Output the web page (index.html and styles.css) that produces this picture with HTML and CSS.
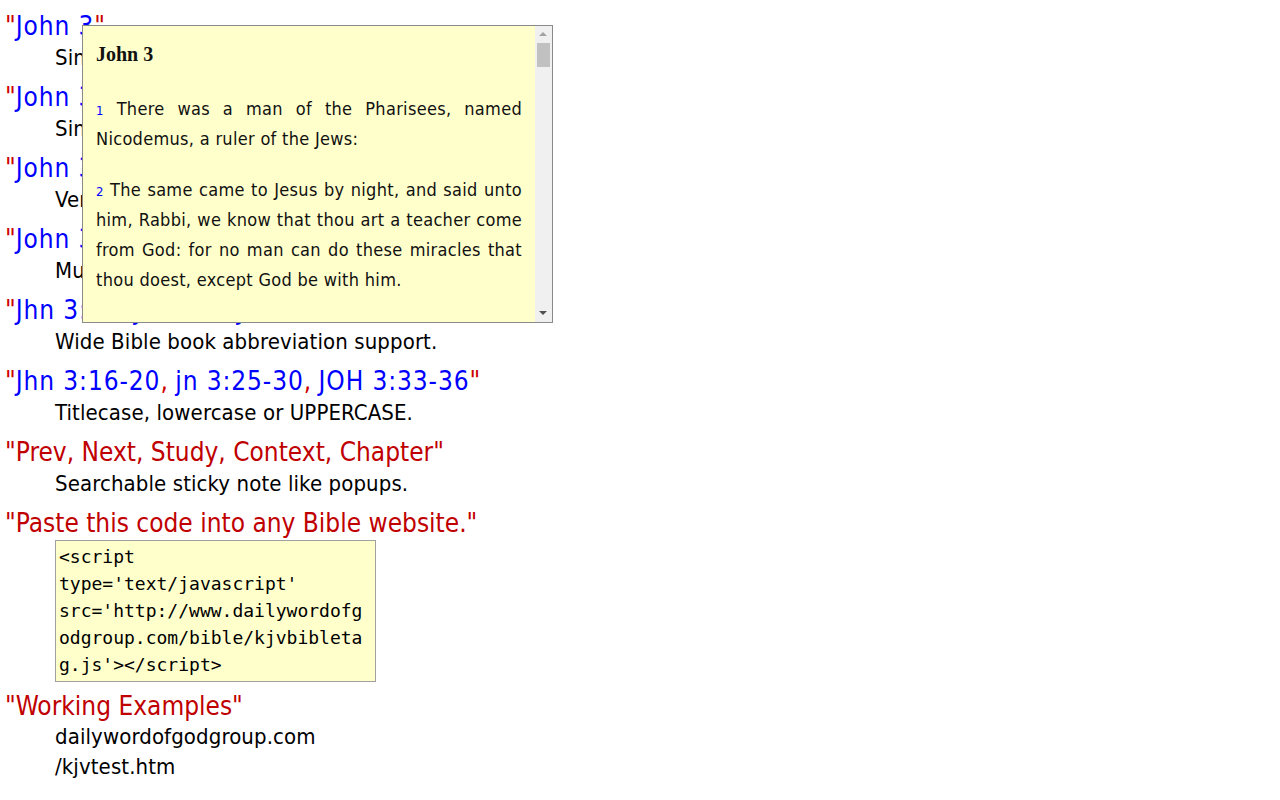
FILE: index.html
```html
<!DOCTYPE html>
<html>
<head>
<meta charset="utf-8">
<link rel="stylesheet" href="styles.css">
</head>
<body>
<div class="page">
  <dl class="list">
    <dt><span class="q">"</span><span class="ref">John 3</span><span class="q">"</span></dt>
    <dd>Simple chapter reference.</dd>
    <dt><span class="q">"</span><span class="ref">John 3:16</span><span class="q">"</span></dt>
    <dd>Simple verse reference.</dd>
    <dt><span class="q">"</span><span class="ref">John 3:16-18</span><span class="q">"</span></dt>
    <dd>Verse range reference.</dd>
    <dt><span class="q">"</span><span class="ref">John 3:16</span><span class="q">, </span><span class="ref">18</span><span class="q">, </span><span class="ref">20</span><span class="q">"</span></dt>
    <dd>Multiple verse references.</dd>
    <dt><span class="q">"</span><span class="ref">Jhn 3:16</span><span class="q">, </span><span class="ref">Jn 3:16</span><span class="q">, </span><span class="ref">Joh 3:16</span><span class="q">"</span></dt>
    <dd>Wide Bible book abbreviation support.</dd>
    <dt><span class="q">"</span><span class="ref">Jhn 3:16-20</span><span class="q">, </span><span class="ref">jn 3:25-30</span><span class="q">, </span><span class="ref">JOH 3:33-36</span><span class="q">"</span></dt>
    <dd>Titlecase, lowercase or UPPERCASE.</dd>
    <dt class="red">"Prev, Next, Study, Context, Chapter"</dt>
    <dd>Searchable sticky note like popups.</dd>
    <dt class="red">"Paste this code into any Bible website."</dt>
    <dd class="code-dd"><div class="code">&lt;script type='text/javascript' src='http://www.dailywordofgodgroup.com/bible/kjvbibletag.js'&gt;&lt;/script&gt;</div></dd>
    <dt class="red">"Working Examples"</dt>
    <dd class="link">dailywordofgodgroup.com<br>/kjvtest.htm</dd>
  </dl>

  <div class="popup">
    <div class="popup-body">
      <h3 class="popup-title">John 3</h3>
      <p class="verse first"><span class="vn">1</span> There was a man of the Pharisees, named Nicodemus, a ruler of the Jews:</p>
      <p class="verse"><span class="vn">2</span> The same came to Jesus by night, and said unto him, Rabbi, we know that thou art a teacher come from God: for no man can do these miracles that thou doest, except God be with him.</p>
      <p class="verse"><span class="vn">3</span> Jesus answered and said unto him, Verily, verily, I say unto thee, Except a man be born again, he cannot see the kingdom of God.</p>
    </div>
    <div class="scrollbar">
      <div class="arrow up"></div>
      <div class="track"><div class="thumb"></div></div>
      <div class="arrow down"></div>
    </div>
  </div>
</div>
</body>
</html>
```
FILE: styles.css
```css
html, body {
  margin: 0;
  padding: 0;
  background: #fff;
}
.page {
  position: relative;
  width: 1280px;
  height: 800px;
  overflow: hidden;
  font-family: "DejaVu Sans Condensed", "DejaVu Sans", sans-serif;
}
.list {
  margin: 0;
  padding: 11px 0 0 5px;
}
.list dt {
  font-size: 26px;
  line-height: 31px;
  color: #cc0000;
  letter-spacing: 0;
}
.list dt .ref {
  color: #0000ff;
  letter-spacing: 0.9px;
}
.list dt .q { color: #cc0000; }
.list dt.red { color: #c00000; }
.list dd {
  margin: 0 0 9px 50px;
  font-size: 22px;
  line-height: 31px;
  letter-spacing: 0.1px;
  color: #000;
}
.list dd.code-dd { margin-bottom: 9px; }
.list dd.link { line-height: 30px; }
.code {
  width: 312px;
  margin-top: 1px;
  padding: 2px 4px 3px 3px;
  border: 1px solid #a0a0a0;
  background: #ffffcc;
  font-family: "DejaVu Sans Mono", "Liberation Mono", monospace;
  font-size: 18px;
  line-height: 27px;
  letter-spacing: 0;
  overflow-wrap: anywhere;
}
.popup {
  position: absolute;
  left: 82px;
  top: 25px;
  width: 469px;
  height: 296px;
  border: 1px solid #8a8a8a;
  background: #ffffcc;
  display: flex;
  overflow: hidden;
}
.popup-body {
  flex: 1;
  padding: 0 13px 0 13px;
  overflow: hidden;
  font-family: "DejaVu Sans Condensed", "DejaVu Sans", sans-serif;
  font-size: 18px;
  letter-spacing: 0.3px;
  line-height: 30px;
  color: #111;
}
.popup-title {
  margin: 13px 0 0 0;
  font-family: "Liberation Serif", serif;
  font-weight: bold;
  font-size: 20px;
  line-height: 30px;
  letter-spacing: 0;
}
.verse {
  margin: 21px 0 0 0;
  text-align: justify;
}
.verse.first { margin-top: 25px; }
.vn {
  color: #0000ff;
  font-size: 13px;
  line-height: 0;
}
.scrollbar {
  width: 17px;
  background: #f0f0f0;
  display: flex;
  flex-direction: column;
}
.arrow {
  height: 17px;
  position: relative;
}
.arrow::after {
  content: "";
  position: absolute;
  left: 4px;
  top: 6px;
  border-left: 4px solid transparent;
  border-right: 4px solid transparent;
}
.arrow.up::after { border-bottom: 4px solid #a3a3a3; }
.arrow.down::after { border-top: 4px solid #505050; }
.track {
  flex: 1;
  padding: 0 2px;
}
.thumb {
  height: 24px;
  background: #c1c1c1;
}
```
